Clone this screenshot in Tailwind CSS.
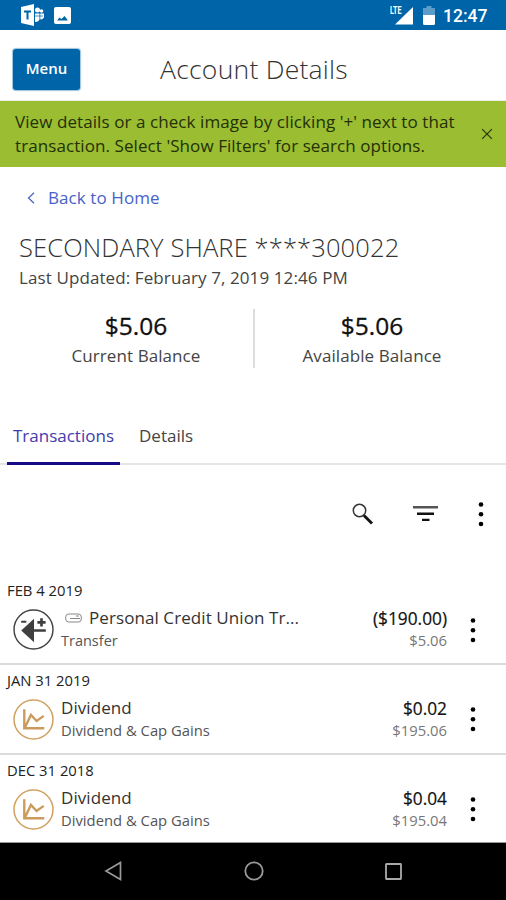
<!DOCTYPE html>
<html lang="en">
<head>
<meta charset="utf-8">
<title>Account Details</title>
<script src="https://cdn.jsdelivr.net/npm/@tailwindcss/browser@4"></script>
</head>
<body class="w-[506px] h-[900px] overflow-hidden bg-white font-['Open_Sans',sans-serif] text-[#333] whitespace-nowrap flex flex-col">
<svg class="hidden">
  <symbol id="dots" viewBox="0 0 6 26"><circle cx="3" cy="3.500" r="2.300"/><circle cx="3" cy="13.200" r="2.300"/><circle cx="3" cy="23" r="2.300"/></symbol>
  <symbol id="chart" viewBox="0 0 40 40"><circle cx="20" cy="20" r="19" fill="none" stroke="#d2a263" stroke-width="1.500"/><path d="M11 10v18.500H30.500M12 27l5.500-11.500 5.500 6L30 16.500" fill="none" stroke="#cb9a5c" stroke-width="2.300"/></symbol>
</svg>
<div class="h-[30px] shrink-0 bg-[#0065a8] flex items-center pl-[21px] pr-[18px]">
  <svg class="w-[24px] h-[22px]" viewBox="0 0 24 22"><path d="M0 3 13 0v22L0 19z" fill="#fff"/><path d="M3 7.500h7M6.500 7.500v8" stroke="#0065a8" stroke-width="2"/><g fill="#fff"><circle cx="16.500" cy="6" r="2.500"/><circle cx="20.500" cy="7" r="1.800"/><path d="M14 9.500h4.500v6q-1 2.500-4.500 2.500zM19.300 9.500H23v4q-1 2-3.700 2z"/></g><path d="M14 12h8" stroke="#0065a8" stroke-width=".7"/></svg>
  <svg class="w-[17px] h-[17px] ml-[9px]" viewBox="0 0 17 17"><rect width="17" height="17" rx="2" fill="#fff"/><path d="M3 13.500l2.500-3 2 1.500 3-3 3.500 4.500z" fill="#0065a8"/></svg>
  <svg class="w-[24px] h-[20px] ml-auto" viewBox="0 0 24 20"><path d="M23 2v17.500H5z" fill="#fff"/><text x="0" y="9" font-family="Roboto" font-weight="700" font-size="10" textLength="11.500" lengthAdjust="spacingAndGlyphs" fill="#fff" stroke="#0065a8" stroke-width="1.200" paint-order="stroke">LTE</text></svg>
  <svg class="w-[12px] h-[19px] ml-[9px]" viewBox="0 0 12 19"><path d="M3.500 0h5v2H12v7H0V2h3.500z" fill="#5b9cc8"/><path d="M0 9h12v8.500q0 1.500-1.500 1.500h-9Q0 19 0 17.500z" fill="#fff"/></svg>
  <div class="ml-[8px] mt-[2px] w-[45px] font-['Roboto',sans-serif] font-medium text-[17.500px] leading-[20px] text-white">12:47</div>
</div>
<header class="h-[71px] shrink-0 flex items-center pl-[13px] border-b border-[#eee]">
  <button class="w-[67px] h-[41px] mt-[9px] rounded-[3px] bg-[#0065a8] shadow-[0_0_1px_1px_#0065a866] text-white font-semibold text-[15px] leading-[20px] pb-[3px]">Menu</button>
  <h1 class="ml-[80px] mt-[8px] font-light text-[26.500px] leading-[36px] tracking-[0.250px] text-[#333]">Account Details</h1>
</header>
<section class="h-[66px] shrink-0 bg-[#9abd31] flex items-center justify-between pl-[15px] pr-[13px] text-[#243008]">
  <p class="text-[17px] leading-[24px] tracking-[0.080px]">View details or a check image by clicking '+' next to that<br>transaction. Select 'Show Filters' for search options.</p>
  <svg class="w-[12px] h-[12px]" viewBox="0 0 13 13" fill="none" stroke="#2b390b" stroke-width="1.400"><path d="M1.200 1.200l10.600 10.600M11.800 1.200L1.200 11.800"/></svg>
</section>
<a class="h-[24px] mt-[19px] ml-[27px] shrink-0 flex items-center text-[17px] leading-[24px] tracking-[0.080px] text-[#4861c9]"><svg class="w-[8px] h-[12px] mr-[13px]" viewBox="0 0 8 12" fill="none" stroke="#5268c4" stroke-width="1.300"><path d="M7 .8 1.500 6 7 11.200"/></svg>Back to Home</a>
<h2 class="mt-[19px] ml-[19px] shrink-0 font-light text-[25.500px] leading-[36px] tracking-[0.120px] text-[#333]">SECONDARY SHARE ****300022</h2>
<p class="mt-[2px] ml-[19px] shrink-0 text-[17px] leading-[22px] tracking-[0.100px] text-[#444]">Last Updated: February 7, 2019 12:46 PM</p>
<section class="h-[59px] mt-[20px] shrink-0 flex text-center">
  <div class="w-[255px] pl-[19px] border-r-2 border-[#ddd]"><div class="text-[24.500px] leading-[33px] mb-[2px] [-webkit-text-stroke:0.3px_#111] text-[#111]">$5.06</div><div class="text-[17px] leading-[24px] tracking-[0.080px] text-[#444]">Current Balance</div></div>
  <div class="w-[234px]"><div class="text-[24.500px] leading-[33px] mb-[2px] [-webkit-text-stroke:0.3px_#111] text-[#111]">$5.06</div><div class="text-[17px] leading-[24px] tracking-[0.080px] text-[#444]">Available Balance</div></div>
</section>
<nav class="h-[54px] mt-[43px] shrink-0 flex border-b-2 border-[#e5e5e8] pl-[7px] text-[17px] leading-[24px] pt-[13px]">
  <a class="w-[113px] h-[41px] text-center text-[#433cae] border-b-3 border-[#160b85]">Transactions</a>
  <a class="ml-[19px] text-[#444]">Details</a>
</nav>
<div class="h-[98px] shrink-0 flex items-center justify-end pr-[22px]">
  <svg class="w-[21px] h-[22px]" viewBox="0 0 21 22" fill="none"><circle cx="7.500" cy="7.500" r="6.200" stroke="#333" stroke-width="1.500"/><path d="M12 12.500l8 8" stroke="#111" stroke-width="2.800"/></svg>
  <svg class="w-[25px] h-[16px] ml-[40px]" viewBox="0 0 25 16"><path d="M0 0h25v2.500H0z" fill="#555"/><path d="M4 6.500h17V9H4zM9 12.700h7.500V15H9z" fill="#111"/></svg>
  <svg class="w-[6px] h-[26px] ml-[40px]"><use href="#dots"/></svg>
</div>
<main class="mt-[16px] shrink-0 h-[264px] overflow-hidden">
  <article class="h-[86px] border-b-2 border-[#dcdcdc]">
    <div class="h-[24px] pl-[7px] text-[14.800px] leading-[22px] text-[#222]">FEB 4 2019</div>
    <div class="flex pl-[13px]">
      <svg class="w-[41px] h-[41px] mt-[6px] shrink-0" viewBox="0 0 40 40"><circle cx="20" cy="20" r="19" fill="none" stroke="#444" stroke-width="1.400"/><path d="M8 21 20.500 9.500V32.500zM20 19.700h12v2.600H20zM8 11.500h5v2H8zM26.500 9h2.600v2.700h2.700v2.600h-2.700V17h-2.600v-2.700h-2.700v-2.600h2.700z" fill="#3f3f3f"/></svg>
      <div class="ml-[7px] w-[246px]"><div class="flex items-center text-[17px] leading-[24px] tracking-[0.080px] mt-[3px]"><svg class="w-[17px] h-[10px] ml-[4px] mr-[7px]" viewBox="0 0 17 10" fill="none" stroke="#888"><rect x=".7" y="1" width="15.600" height="8" rx="3"/><path d="M5 5.500h10M11 3h3"/></svg>Personal Credit Union Tr...</div><div class="text-[14.500px] leading-[21px] text-[#555]">Transfer</div></div>
      <div class="w-[140px] text-right"><div class="text-[17.300px] leading-[25px] -mb-px mt-[3px] [-webkit-text-stroke:0.2px_#111] text-[#111]">($190.00)</div><div class="text-[14.800px] leading-[21px] text-[#777]">$5.06</div></div>
      <svg class="w-[6px] h-[26px] ml-[23px] mt-[14px]"><use href="#dots"/></svg>
    </div>
  </article>
  <article class="h-[90px] pt-[4px] border-b-2 border-[#dcdcdc]">
    <div class="h-[24px] pl-[7px] text-[14.800px] leading-[22px] text-[#222]">JAN 31 2019</div>
    <div class="flex pl-[13px]">
      <svg class="w-[41px] h-[41px] mt-[6px] shrink-0"><use href="#chart"/></svg>
      <div class="ml-[7px] w-[246px]"><div class="text-[17px] leading-[24px] tracking-[0.080px] mt-[3px]">Dividend</div><div class="text-[14.800px] leading-[21px] text-[#555]">Dividend &amp; Cap Gains</div></div>
      <div class="w-[140px] text-right"><div class="text-[17.300px] leading-[25px] -mb-px mt-[3px] [-webkit-text-stroke:0.2px_#111] text-[#111]">$0.02</div><div class="text-[14.800px] leading-[21px] text-[#777]">$195.06</div></div>
      <svg class="w-[6px] h-[26px] ml-[23px] mt-[13px]"><use href="#dots"/></svg>
    </div>
  </article>
  <article class="h-[88px] pt-[4px] border-b border-[#999]">
    <div class="h-[24px] pl-[7px] text-[14.800px] leading-[22px] text-[#222]">DEC 31 2018</div>
    <div class="flex pl-[13px]">
      <svg class="w-[41px] h-[41px] mt-[6px] shrink-0"><use href="#chart"/></svg>
      <div class="ml-[7px] w-[246px]"><div class="text-[17px] leading-[24px] tracking-[0.080px] mt-[3px]">Dividend</div><div class="text-[14.800px] leading-[21px] text-[#555]">Dividend &amp; Cap Gains</div></div>
      <div class="w-[140px] text-right"><div class="text-[17.300px] leading-[25px] -mb-px mt-[3px] [-webkit-text-stroke:0.2px_#111] text-[#111]">$0.04</div><div class="text-[14.800px] leading-[21px] text-[#777]">$195.04</div></div>
      <svg class="w-[6px] h-[26px] ml-[23px] mt-[13px]"><use href="#dots"/></svg>
    </div>
  </article>
</main>
<footer class="flex-1 bg-black flex items-center pl-[104px] pb-[1px] gap-[122px]">
  <svg class="w-[18px] h-[20px]" viewBox="0 0 18 20" fill="none" stroke="#999" stroke-width="1.700"><path d="M16.500 1.500v17L2 10z"/></svg>
  <svg class="w-[20px] h-[20px]" viewBox="0 0 20 20" fill="none" stroke="#999" stroke-width="1.800"><circle cx="10" cy="10" r="8.700"/></svg>
  <svg class="w-[17px] h-[17px] -ml-px" viewBox="0 0 17 17" fill="none" stroke="#aaa" stroke-width="1.800"><rect x="1" y="1" width="15" height="15" rx=".5"/></svg>
</footer>
</body>
</html>
